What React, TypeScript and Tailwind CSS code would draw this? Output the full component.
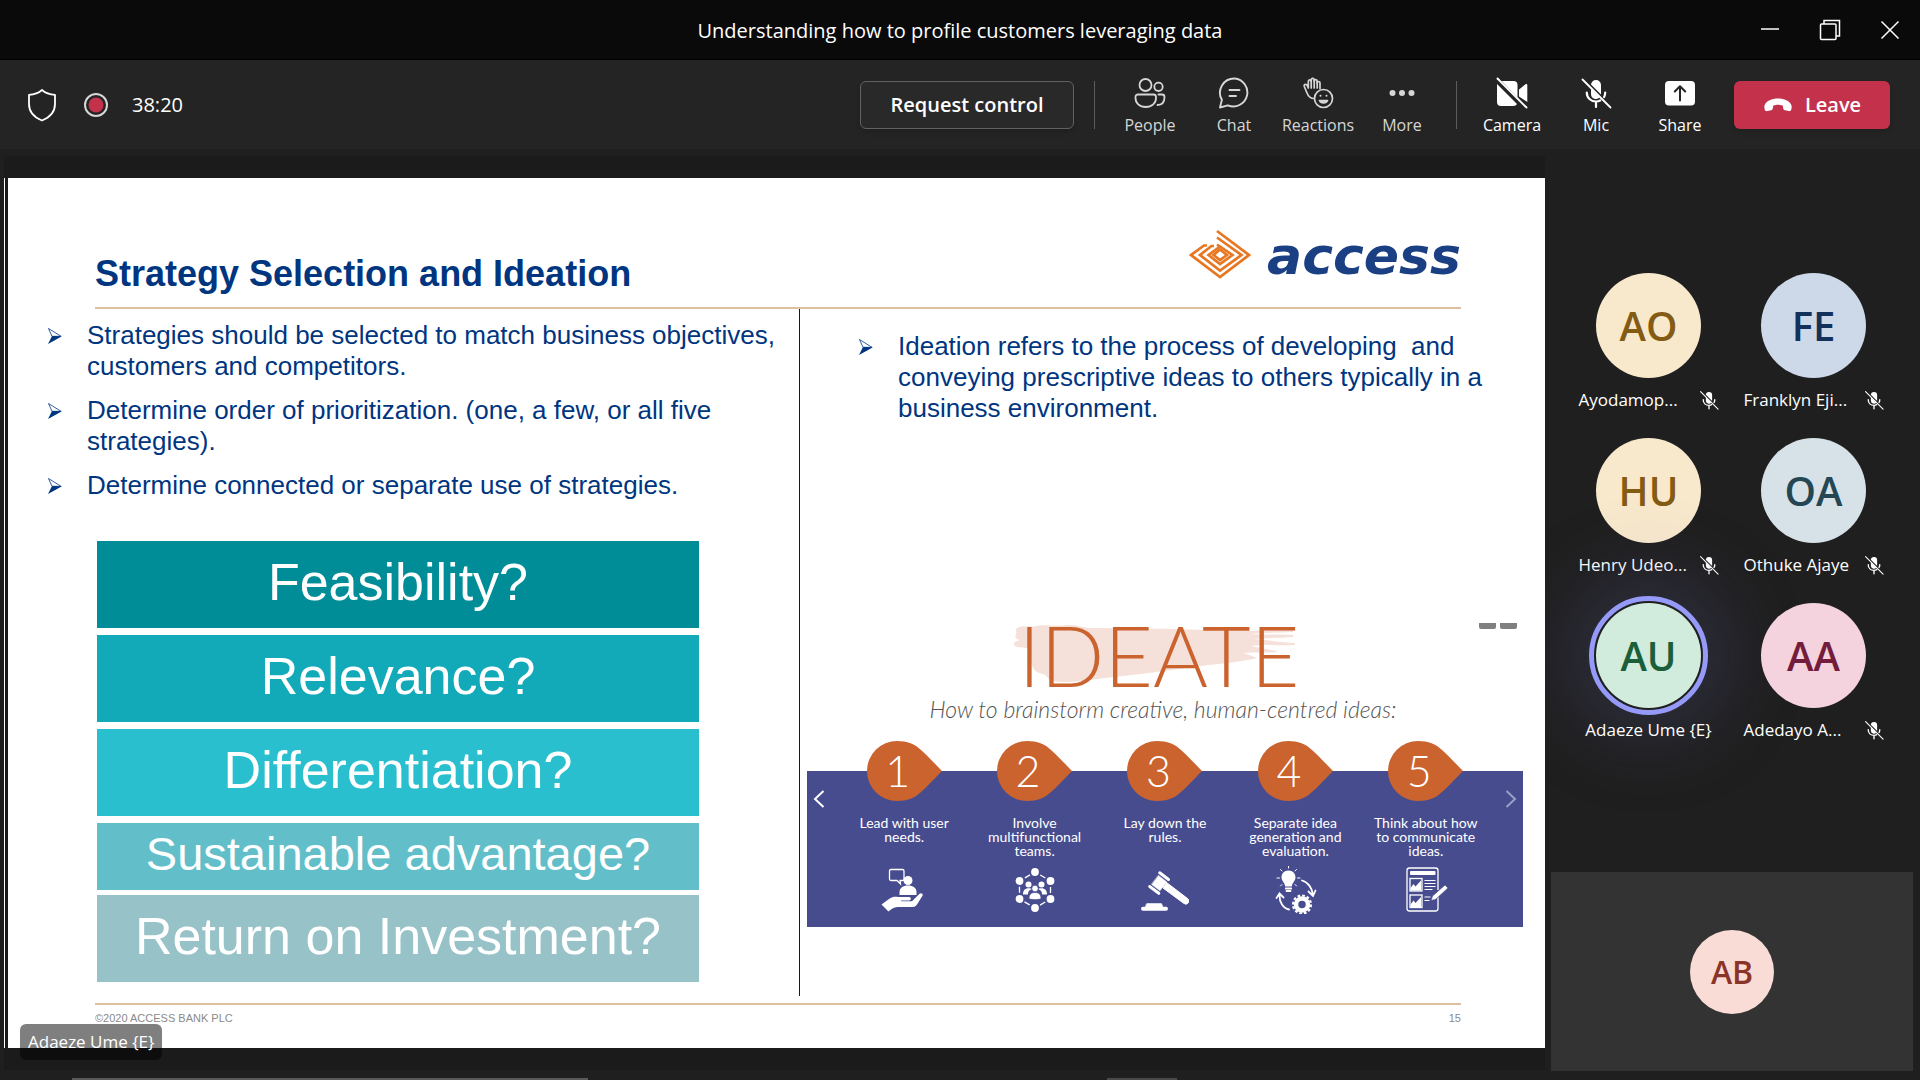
import React from "react";

const ui = "font-['Open_Sans','Noto_Sans',sans-serif]";
const lato = "font-['Lato',sans-serif]";

type IconProps = { className?: string };

function MicOff({ className = "size-5" }: IconProps) {
  return (
    <svg viewBox="0 0 32 32" className={className} fill="none" stroke="currentColor" strokeWidth="2.2" strokeLinecap="round" aria-hidden="true">
      <path d="M11 8v0a5 5 0 0 1 10 0v9.5L11 7.5z" fill="currentColor" stroke="none" />
      <path d="M11 11.5l8.8 8.8A5 5 0 0 1 11 17z" fill="currentColor" stroke="none" />
      <path d="M6.8 15.5c0 5.4 4 9 9.200 9 1.600 0 3-.3 4.200-1M25.200 15.500c0 1.700-.4 3.200-1.100 4.500M16 25v5" />
      <path d="M2.500 2.500l28 28" strokeWidth="1.800" />
    </svg>
  );
}

function PeopleIcon() {
  return (
    <svg viewBox="0 0 32 32" className="size-8" fill="none" stroke="currentColor" strokeWidth="1.800" strokeLinecap="round" aria-hidden="true">
      <circle cx="11.500" cy="8" r="6" />
      <circle cx="24.500" cy="9.800" r="4.200" />
      <path d="M4 17.500h15.500a2.500 2.500 0 0 1 2.500 2.500v1c0 5-4 9-10.300 9S1.500 26 1.500 21v-1A2.500 2.500 0 0 1 4 17.500z" />
      <path d="M24.500 17.500H28a2.500 2.500 0 0 1 2.500 2.500c0 5-2.500 8-7 8" />
    </svg>
  );
}

function ChatIcon() {
  return (
    <svg viewBox="0 0 32 32" className="size-8" fill="none" stroke="currentColor" strokeWidth="1.900" strokeLinecap="round" strokeLinejoin="round" aria-hidden="true">
      <path d="M16.500 1.500A14 14 0 1 1 9.800 28.300L2 30.500l1.900-7.700A14.200 14.200 0 0 1 16.500 1.500z" />
      <path d="M11.500 13h10M11.500 19h6.500" />
    </svg>
  );
}

function ReactionsIcon() {
  return (
    <svg viewBox="0 0 32 32" className="size-8" fill="none" stroke="currentColor" strokeWidth="1.700" strokeLinecap="round" strokeLinejoin="round" aria-hidden="true">
      <path d="M12 21.500C8 21.500 6.200 19 5 16L2.300 9.500c-.5-1.300.2-2.200 1.200-2.200S5 8 5.500 9l.8 2V4.500c0-2.200 2.900-2.200 2.900 0V3c0-2.300 3-2.300 3 0v1.200c0-2.200 3-2.200 3 0V6c0-2 2.800-2 2.800 0v5.500" />
      <path d="M9.200 4v7M12.200 3.500V11M15.200 4.500V11" />
      <circle cx="21.500" cy="21.500" r="9" />
      <path d="M17.500 23.500c1.300 3.300 6.700 3.300 8 0z" fill="currentColor" />
      <circle cx="18.500" cy="18.800" r="1" fill="currentColor" stroke="none" />
      <circle cx="24.500" cy="18.800" r="1" fill="currentColor" stroke="none" />
    </svg>
  );
}

function MoreIcon() {
  return (
    <svg viewBox="0 0 32 32" className="size-8" fill="currentColor" aria-hidden="true">
      <circle cx="6.500" cy="16" r="3" />
      <circle cx="16" cy="16" r="3" />
      <circle cx="25.500" cy="16" r="3" />
    </svg>
  );
}

function CameraOffIcon() {
  return (
    <svg viewBox="0 0 32 32" className="size-8" fill="currentColor" aria-hidden="true">
      <path d="M7 4h10.500a4 4 0 0 1 4 4v12.500L5.500 4z" />
      <path d="M1 7l20 20a4 4 0 0 1-3.500 2H5a4 4 0 0 1-4-4z" />
      <path d="M23 12.500l6.500-5.200c.8-.6 1.800-.2 1.800.8V25l-8.300-5.500z" />
      <path d="M1.500 1.500l29 29" stroke="currentColor" strokeWidth="1.900" strokeLinecap="round" />
    </svg>
  );
}

function ShareIcon() {
  return (
    <svg viewBox="0 0 32 32" className="size-8" aria-hidden="true">
      <rect x="1" y="4" width="30" height="24.500" rx="4" fill="currentColor" />
      <path d="M16 23.500V9.500M10.800 14.500L16 9.300l5.200 5.200" fill="none" stroke="#242424" strokeWidth="2" strokeLinecap="round" strokeLinejoin="round" />
    </svg>
  );
}

function ToolButton({ label, children, strong }: { label: string; children: React.ReactNode; strong?: boolean }) {
  return (
    <button type="button" className={`flex w-[84px] flex-col items-center gap-1 pt-1 text-base leading-6 ${strong ? "text-white" : "text-[#d6d6d6]"}`}>
      {children}
      <span>{label}</span>
    </button>
  );
}

function TitleBar() {
  return (
    <header className="grid h-[59px] grid-cols-[1fr_auto_1fr] items-center bg-[#0a0a0a] text-white">
      <span />
      <h1 className="pt-0.5 text-xl">Understanding how to profile customers leveraging data</h1>
      <div className="flex justify-end">
        <button type="button" aria-label="Minimize" className="grid h-[56px] w-[60px] place-items-center">
          <svg viewBox="0 0 20 20" className="size-5" stroke="currentColor" strokeWidth="1.500"><path d="M1 9h18" /></svg>
        </button>
        <button type="button" aria-label="Restore" className="grid h-[56px] w-[60px] place-items-center">
          <svg viewBox="0 0 22 22" className="size-[22px]" fill="none" stroke="currentColor" strokeWidth="1.500">
            <rect x="1.500" y="5" width="15.500" height="15.500" rx="1" />
            <path d="M5 5V1.500h15.500V17H17" />
          </svg>
        </button>
        <button type="button" aria-label="Close" className="grid h-[56px] w-[60px] place-items-center">
          <svg viewBox="0 0 20 20" className="size-5" stroke="currentColor" strokeWidth="1.500"><path d="M1.500 1.500l17 17M18.500 1.500l-17 17" /></svg>
        </button>
      </div>
    </header>
  );
}

function Toolbar() {
  return (
    <div className="flex h-[90px] items-center border-t border-black bg-[#242424] pr-[30px] pl-[26px] text-white">
      <svg viewBox="0 0 32 36" className="h-9 w-8" fill="none" stroke="currentColor" strokeWidth="1.800" strokeLinejoin="round" aria-hidden="true">
        <path d="M16 3c3.500 3.200 8 4.600 13 4.800V17c0 8.500-5.500 13.500-13 16.500C8.500 30.500 3 25.500 3 17V7.800C8 7.600 12.500 6.200 16 3z" />
      </svg>
      <svg viewBox="0 0 26 26" className="ml-[25px] size-[26px]" aria-hidden="true">
        <circle cx="13" cy="13" r="11" fill="none" stroke="#d6d6d6" strokeWidth="2" />
        <circle cx="13" cy="13" r="7.500" fill="#c4314b" />
      </svg>
      <span className="ml-[23px] text-xl">38:20</span>
      <button type="button" className="ml-auto h-12 w-[214px] rounded-md border border-[#616161] bg-[#292929] text-xl font-semibold shadow-md">
        Request control
      </button>
      <span className="mr-[13px] ml-5 h-12 w-px bg-[#5c5c5c]" />
      <ToolButton label="People"><PeopleIcon /></ToolButton>
      <ToolButton label="Chat"><ChatIcon /></ToolButton>
      <ToolButton label="Reactions"><ReactionsIcon /></ToolButton>
      <ToolButton label="More"><MoreIcon /></ToolButton>
      <span className="mr-[13px] ml-3 h-12 w-px bg-[#5c5c5c]" />
      <ToolButton label="Camera" strong><CameraOffIcon /></ToolButton>
      <ToolButton label="Mic" strong><MicOff className="size-8" /></ToolButton>
      <ToolButton label="Share" strong><ShareIcon /></ToolButton>
      <button type="button" className="ml-3 flex h-12 w-[156px] items-center justify-center gap-3 rounded-md bg-[#c4314b] text-xl font-semibold shadow-md">
        <svg viewBox="0 0 32 16" className="h-4 w-[30px]" fill="currentColor" aria-hidden="true">
          <path d="M16 1c7 0 12 2.500 14 6.500.8 1.800.7 3.700.1 5.500-.4 1.200-1.500 1.700-2.700 1.500l-4-.8c-1-.2-1.600-.9-1.800-1.900l-.6-3.200C19 7.800 17.500 7.600 16 7.600s-3 .2-5 1l-.6 3.200c-.2 1-.8 1.700-1.800 1.900l-4 .8C3.400 14.700 2.300 14.200 1.900 13c-.6-1.800-.7-3.700.1-5.500C4 3.500 9 1 16 1z" />
        </svg>
        Leave
      </button>
    </div>
  );
}

function BulletList({ items, className }: { items: string[]; className: string }) {
  return (
    <ul className={`flex flex-col gap-[13px] text-[26px] leading-[31px] text-[#003580] ${className}`}>
      {items.map((text) => (
        <li key={text} className="flex">
          <svg viewBox="0 0 16 18" className="mt-[7px] mr-6 h-[18px] w-4 shrink-0" aria-hidden="true">
            <path d="M1.500 1.500L14 9.300 5 9.300z" fill="#fff" stroke="#003580" strokeWidth="0.800" strokeLinejoin="round" />
            <path d="M5 9L15 9.300 1 17z" fill="#003580" />
          </svg>
          <span className="whitespace-pre-wrap">{text}</span>
        </li>
      ))}
    </ul>
  );
}

function AccessLogo() {
  return (
    <div className="flex items-center gap-4">
      <svg viewBox="0 0 62 50" className="mb-1 h-[50px] w-[62px]" fill="none" stroke="#e87722" strokeWidth="2.700" strokeLinejoin="miter" aria-hidden="true">
        <path d="M28 2L60 26 31 48 2 26 15 16.500H18" />
        <path d="M28 8.500L52.500 26 31 41.500 11 26 22.500 17H25" />
        <path d="M28 15.500L43.500 26 31 35 19.500 26 31 17.500" />
        <path d="M31 20.500L38 26 31 31 24.500 26z" />
      </svg>
      <span className="font-['DejaVu_Sans',sans-serif] text-[52px] leading-[50px] font-bold text-[#1a3f82] italic">access</span>
    </div>
  );
}

const boxes = [
  { label: "Feasibility?", style: "h-[87px] bg-[#008d97] text-[52px]" },
  { label: "Relevance?", style: "h-[87px] bg-[#12aab8] text-[52px]" },
  { label: "Differentiation?", style: "h-[87px] bg-[#2abfce] text-[52px]" },
  { label: "Sustainable advantage?", style: "h-[67px] bg-[#62bfc9] text-[47px]" },
  { label: "Return on Investment?", style: "-mt-0.5 h-[87px] bg-[#96c2c8] text-[52px]" },
];

const stepIcon = "h-12 w-12";

function HandUserIcon() {
  return (
    <svg viewBox="0 0 48 48" className={stepIcon} fill="#fff" aria-hidden="true">
      <path d="M11 3.500h11.500a1.500 1.500 0 0 1 1.500 1.500v8a1.500 1.500 0 0 1-1.500 1.500H20L20.500 18 17 14.500h-6A1.500 1.500 0 0 1 9.500 13V5A1.500 1.500 0 0 1 11 3.500z" fill="none" stroke="#fff" strokeWidth="1.300" />
      <circle cx="28" cy="14.500" r="4.500" />
      <path d="M19.500 29v-3c0-4 3.500-6.500 8.500-6.500s8.500 2.500 8.500 6.500v3z" />
      <path d="M1.500 38.500L9 33c3-2.200 6-2.400 9-2h11c2.500 0 2.500 3.500 0 3.500h-8v.8h9.500c1.500 0 2-.5 3-1.500l6-6c1.800-1.500 4 .3 3 2L37 38.500C35 41 34 41 31 41H18c-3 0-5 1-7 2.500L8.500 45.500z" />
    </svg>
  );
}

function TeamIcon() {
  return (
    <svg viewBox="0 0 48 48" className={stepIcon} fill="#fff" aria-hidden="true">
      <path d="M24 6L39.500 15v18L24 42 8.500 33V15z" fill="none" stroke="#fff" strokeWidth="1.300" strokeDasharray="0 6 6 6" />
      <circle cx="24" cy="6" r="3.900" />
      <circle cx="39.500" cy="15" r="3.900" />
      <circle cx="39.500" cy="33" r="3.900" />
      <circle cx="24" cy="42" r="3.900" />
      <circle cx="8.500" cy="33" r="3.900" />
      <circle cx="8.500" cy="15" r="3.900" />
      <circle cx="17.500" cy="18.500" r="3" />
      <circle cx="30.500" cy="18.500" r="3" />
      <path d="M12 28.500c0-4 2-6.200 5.500-6.200s3 1 3 1c-3 1-3.500 3-3.500 5.200zM36 28.500c0-4-2-6.200-5.500-6.200s-3 1-3 1c3 1 3.500 3 3.500 5.200z" />
      <circle cx="24" cy="22.500" r="3.200" stroke="#474c8f" strokeWidth="0.700" />
      <path d="M18 32.500c0-4 2-6 6-6s6 2 6 6c-1 1.500-11 1.500-12 0z" stroke="#474c8f" strokeWidth="0.700" />
    </svg>
  );
}

function GavelIcon() {
  return (
    <svg viewBox="0 0 48 48" className={stepIcon} fill="#fff" stroke="#fff" strokeLinecap="round" strokeLinejoin="round" aria-hidden="true">
      <path d="M6 37.800h14.500l1 2.700H5z" strokeWidth="1" />
      <path d="M2 42.700h23" strokeWidth="4" />
      <path d="M18.700 6.800L27.500 13.500" strokeWidth="3" />
      <path d="M8.700 20.500L17.800 27.300" strokeWidth="3" />
      <path d="M17.500 9.500l8 6.200-6.500 9-8.300-6.300z" strokeWidth="0.500" />
      <path d="M25.500 16.500L46.500 32.500a2.600 2.600 0 0 1-3.500 5L22 22z" strokeWidth="1" />
    </svg>
  );
}

function IdeaCycleIcon() {
  return (
    <svg viewBox="0 0 48 48" className={stepIcon} fill="none" stroke="#fff" strokeWidth="1.400" strokeLinecap="round" aria-hidden="true">
      <path d="M17.500 4.500c4.300 0 7 3 7 6.800 0 3.700-3.200 5.200-3.700 9.200h-6.600c-.5-4-3.700-5.500-3.700-9.200 0-3.800 2.700-6.800 7-6.800z" fill="#fff" stroke="none" />
      <path d="M14.800 22.500h5.400M15.500 25h4" strokeWidth="1.800" />
      <path d="M17.500 0v2M9.500 3.500l1.500 1.500M25.500 3.500L24 5M6 12h2.500M26.500 12H29M9.500 20l1.500-1.500M25.500 20L24 18.500" strokeWidth="1" />
      <path d="M31 14.500c6 1.500 10 7.500 11 14M37.500 25.500l4.500 4.500 2.500-5.500" strokeWidth="1.800" />
      <path d="M18 43.500C12 42.500 8.500 36 8.500 29.500M5.500 32l3-4.500 4 4" strokeWidth="1.800" />
      <circle cx="31" cy="38.500" r="6" strokeWidth="4.500" />
      <circle cx="31" cy="38.500" r="9" strokeWidth="2.200" strokeDasharray="2.700 2" strokeLinecap="butt" />
    </svg>
  );
}

function ReportIcon() {
  return (
    <svg viewBox="0 0 48 48" className={stepIcon} fill="none" stroke="#fff" strokeWidth="1.300" aria-hidden="true">
      <path d="M36 30v12.500a2.500 2.500 0 0 1-2.500 2.500h-26A2.500 2.500 0 0 1 5 42.500v-38A2.500 2.500 0 0 1 7.500 2h26A2.500 2.500 0 0 1 36 4.500V24" />
      <rect x="8" y="5" width="25.500" height="4" rx="1" fill="#fff" stroke="none" />
      <rect x="8" y="12.500" width="12" height="12.500" />
      <rect x="8" y="29" width="12" height="12.500" />
      <path d="M8.500 24.500V22l3-4 2 2.500 5.500-6v10zM8.500 41v-2.500l3-4 2 2.500 5.500-6v10z" fill="#fff" stroke="none" />
      <path d="M22.500 14.500h11M22.500 17.500h11M22.500 20.500h11M22.500 23.500h8M22.500 31h6M22.500 34.500h5" strokeWidth="1.100" />
      <path d="M29 34.500l1.500-4.500L43 19l3 3-12.500 11.500z" fill="#fff" stroke="#474c8f" strokeWidth="0.700" />
    </svg>
  );
}

const steps = [
  { n: 1, text: "Lead with user needs.", icon: <HandUserIcon /> },
  { n: 2, text: "Involve multifunctional teams.", icon: <TeamIcon /> },
  { n: 3, text: "Lay down the rules.", icon: <GavelIcon /> },
  { n: 4, text: "Separate idea generation and evaluation.", icon: <IdeaCycleIcon /> },
  { n: 5, text: "Think about how to communicate ideas.", icon: <ReportIcon /> },
];

function Infographic() {
  return (
    <section className={`relative mr-[22px] ml-[7px] ${lato}`}>
      <div className="absolute top-2 right-[6px] flex gap-1">
        <span className="h-1.5 w-[17px] rounded-b-xs bg-[#808080]" />
        <span className="h-1.5 w-[17px] rounded-b-xs bg-[#808080]" />
      </div>
      <div className="flex flex-col items-center">
        <div className="relative mr-3">
          <svg viewBox="0 0 281 60" className="absolute top-[10px] left-[-5px] h-[60px] w-[281px]" fill="#f5e1d9" aria-hidden="true">
            <path d="M3 3C8-1 17 3 22 1c10-2 20 1 32-1 8 0 14 2 20 3 50 0 100 1 150 3 20 0 36-2 55-2v3c-14 1-28 0-42 2 14 1 28 0 42 1v2c-14 1-28 1-40 2 14 1 26 3 42 4v2c-15 1-30-1-44 1 8 2 18 3 28 6-14 1-24 0-36 1 6 2 10 3 14 5-20 5-44 6-64 9-30 4-58 8-88 11-15 2-40 6-52 3-8-2-3-6-14-8-6-2-8-9-8-14 0-4-3-6-2-10C12 21 2 24 0 20c-1-3 4-4 6-5-4-1-6-3-4-5 1-2-1-5 1-7z" />
          </svg>
          <h3 className="relative text-[84px] leading-[80px] font-light text-[#cb632f]">IDEATE</h3>
        </div>
        <p className="mr-1 text-[23px] leading-7 font-light text-[#555] italic">How to brainstorm creative, human-centred ideas:</p>
      </div>
      <div className="relative mt-12 h-[156px] bg-[#474c8f] px-8 text-white">
        <button type="button" aria-label="Previous" className="absolute top-[18px] left-[5px]">
          <svg viewBox="0 0 14 20" className="h-5 w-[14px]" fill="none" stroke="currentColor" strokeWidth="2"><path d="M11.500 2L3 10l8.500 8" /></svg>
        </button>
        <button type="button" aria-label="Next" className="absolute top-[18px] right-[5px] text-[#9c9fc4]">
          <svg viewBox="0 0 14 20" className="h-5 w-[14px]" fill="none" stroke="currentColor" strokeWidth="2"><path d="M2.500 2L11 10l-8.500 8" /></svg>
        </button>
        <ol className="relative -top-[30px] grid grid-cols-5">
          {steps.map((s) => (
            <li key={s.n} className="flex flex-col items-center">
              <div className="relative h-[60px] w-[75px]">
                <svg viewBox="0 0 75 60" className="absolute inset-0" fill="#cb632f" aria-hidden="true">
                  <path d="M75 30C66 39 60 46 54 51 48 57 40 60 30 60A30 30 0 0 1 30 0c10 0 18 3 24 9 6 5 12 12 21 21z" />
                </svg>
                <span className="relative block w-[62px] text-center text-[43px] leading-[60px] font-light">{s.n}</span>
              </div>
              <p className="mt-[15px] min-h-[42px] w-[116px] text-center text-sm leading-[14px]">{s.text}</p>
              <div className="mt-2">{s.icon}</div>
            </li>
          ))}
        </ol>
      </div>
    </section>
  );
}

function Slide() {
  return (
    <article className="relative flex flex-1 flex-col bg-white font-['Liberation_Sans',sans-serif]">
      <header className="mr-[84px] ml-[87px] flex h-[131px] items-end justify-between border-b-2 border-[#dcc0a0]">
        <h2 className="pb-2 text-[36px] leading-[50px] font-bold text-[#003580]">Strategy Selection and Ideation</h2>
        <div className="pb-6"><AccessLogo /></div>
      </header>
      <div className="mb-[7px] grid flex-1 grid-cols-[792fr_745fr]">
        <div className="pt-[11px]">
          <BulletList
            className="pr-4 pl-[39px]"
            items={[
              "Strategies should be selected to match business objectives, customers and competitors.",
              "Determine order of prioritization. (one, a few, or all five strategies).",
              "Determine connected or separate use of strategies.",
            ]}
          />
          <div className="mt-10 mr-[101px] ml-[89px] flex flex-col gap-[7px] text-white">
            {boxes.map((b) => (
              <div key={b.label} className={`flex items-center justify-center pb-1.5 leading-none ${b.style}`}>
                {b.label}
              </div>
            ))}
          </div>
        </div>
        <div className="-ml-px flex flex-col border-l border-[#0c1c2c] pt-[22px]">
          <BulletList
            className="pr-12 pl-[58px]"
            items={["Ideation refers to the process of developing  and conveying prescriptive ideas to others typically in a business environment."]}
          />
          <div className="mt-auto pb-[69px]"><Infographic /></div>
        </div>
      </div>
      <footer className="mr-[84px] ml-[87px] flex h-[45px] items-start justify-between border-t-2 border-[#dcc0a0] pt-[5px] text-[11px] leading-4 text-[#8a8a8a]">
        <span>©2020 ACCESS BANK PLC</span>
        <span>15</span>
      </footer>
      <span className={`absolute -bottom-3 left-3 rounded-md bg-black/50 px-2 text-[17px] leading-9 text-white ${ui}`}>Adaeze Ume {"{E}"}</span>
    </article>
  );
}

const people = [
  { initials: "AO", name: "Ayodamop...", tone: "bg-[#f8e9cd] text-[#835b13]", muted: true },
  { initials: "FE", name: "Franklyn Eji...", tone: "bg-[#cdd9e9] text-[#13315a]", muted: true },
  { initials: "HU", name: "Henry Udeo...", tone: "bg-[#f8e9cd] text-[#835b13]", muted: true },
  { initials: "OA", name: "Othuke Ajaye", tone: "bg-[#d6e2e8] text-[#254653]", muted: true },
  { initials: "AU", name: "Adaeze Ume {E}", tone: "bg-[#d1ebdd] text-[#1b5e3a]", muted: false },
  { initials: "AA", name: "Adedayo A...", tone: "bg-[#f4d3df] text-[#731c3c]", muted: true },
];

function Participants() {
  return (
    <aside className="flex w-[375px] shrink-0 flex-col overflow-hidden">
      <ul className="mt-[124px] grid grid-cols-2 gap-y-[26px] pr-6 pl-[21px]">
        {people.map((p) => (
          <li key={p.initials} className="flex flex-col items-center">
            <div className="relative">
              {!p.muted && (
                <span className="absolute -inset-[7px] rounded-full border-[5px] border-[#9599f7] shadow-[0_0_80px_20px_rgba(98,100,167,0.25)]" />
              )}
              <div className={`relative grid size-[105px] place-items-center rounded-full text-[40px] font-semibold ${p.tone}`}>{p.initials}</div>
            </div>
            <div className={`relative mt-[10px] flex w-[140px] items-center text-[17px] leading-6 whitespace-nowrap text-white ${p.muted ? "justify-between" : "justify-center"}`}>
              <span>{p.name}</span>
              {p.muted && <MicOff className="size-5" />}
            </div>
          </li>
        ))}
      </ul>
      <div className="mt-auto mr-[7px] mb-[7px] ml-[6px] grid h-[199px] place-items-center bg-[#333]">
        <div className="grid size-[84px] place-items-center rounded-full bg-[#fadcd7] text-[32px] font-semibold text-[#8a3428]">AB</div>
      </div>
    </aside>
  );
}

export default function App() {
  return (
    <div className={`flex min-h-screen flex-col bg-[#1f1f1f] ${ui}`}>
      <TitleBar />
      <Toolbar />
      <main className="flex flex-1">
        <div className="mt-[7px] mb-2 ml-1 flex flex-1 bg-[#1b1b1b] pt-[22px] pb-[22px]">
          <span className="mr-[3px] w-px bg-white" />
          <Slide />
        </div>
        <Participants />
      </main>
      <div className="flex h-0.5">
        <span className="ml-[72px] w-[516px] bg-[#5a5a5a]" />
        <span className="ml-[519px] w-[70px] bg-[#4a4a4a]" />
      </div>
    </div>
  );
}
